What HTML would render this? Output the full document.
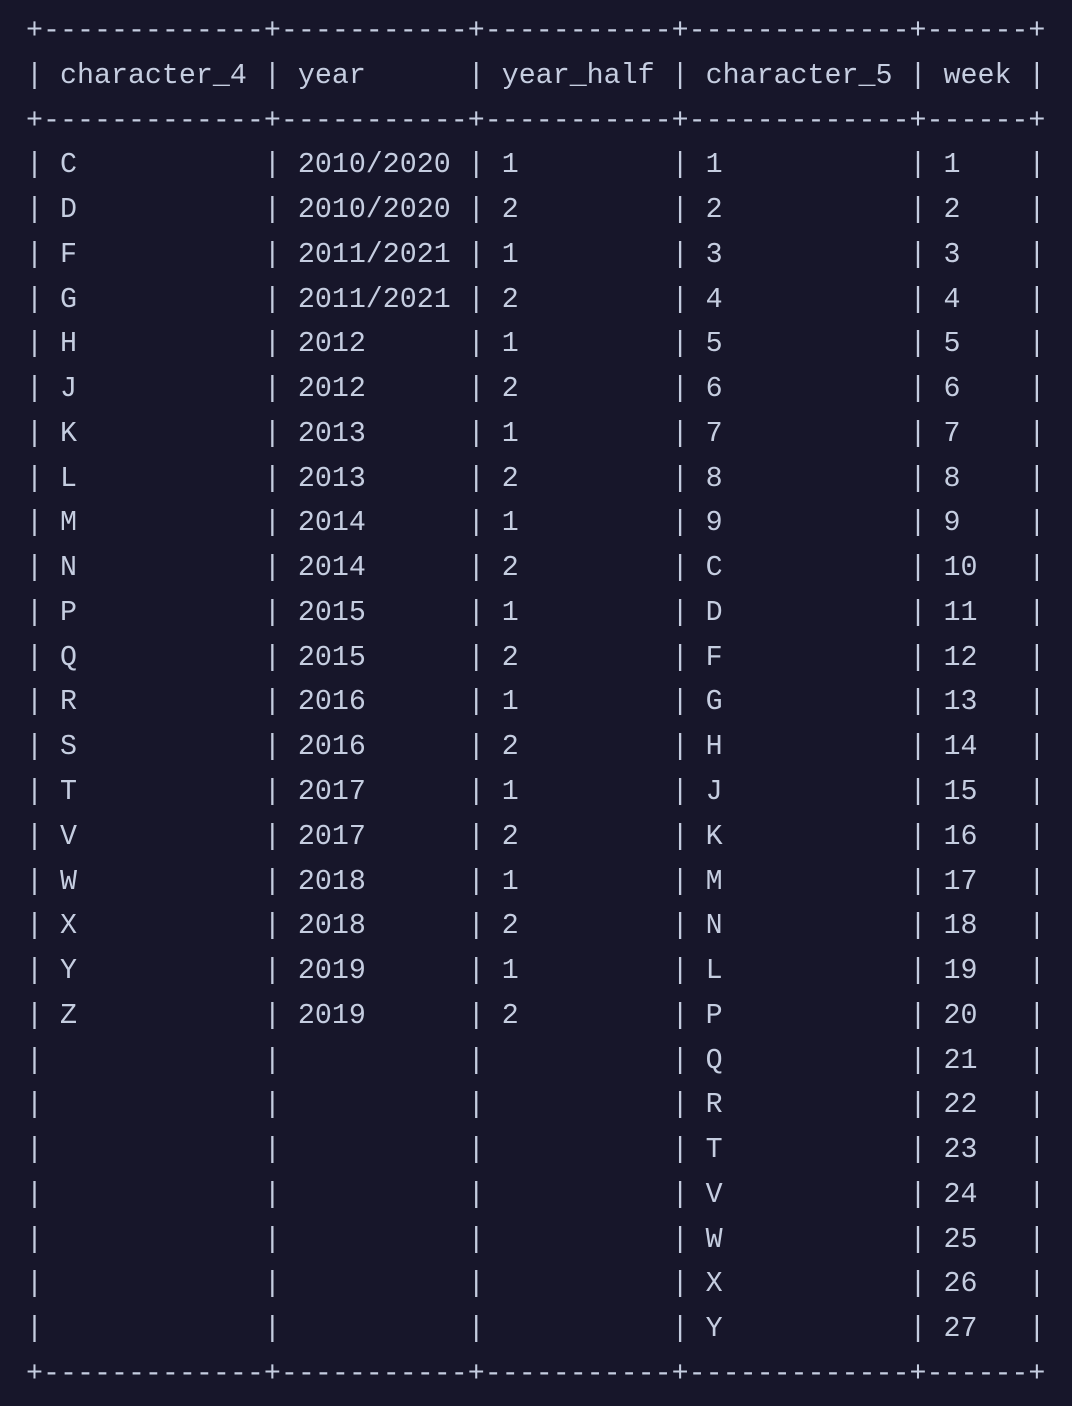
<!DOCTYPE html><html><head><style>
html,body{margin:0;padding:0;background:#17162a;width:1072px;height:1406px;overflow:hidden}
pre{position:absolute;left:26px;top:9px;margin:0;font-family:"Liberation Mono",monospace;font-size:28.32px;line-height:44.77px;color:#c5cde0}
</style></head><body><pre>+-------------+-----------+-----------+-------------+------+
| character_4 | year      | year_half | character_5 | week |
+-------------+-----------+-----------+-------------+------+
| C           | 2010/2020 | 1         | 1           | 1    |
| D           | 2010/2020 | 2         | 2           | 2    |
| F           | 2011/2021 | 1         | 3           | 3    |
| G           | 2011/2021 | 2         | 4           | 4    |
| H           | 2012      | 1         | 5           | 5    |
| J           | 2012      | 2         | 6           | 6    |
| K           | 2013      | 1         | 7           | 7    |
| L           | 2013      | 2         | 8           | 8    |
| M           | 2014      | 1         | 9           | 9    |
| N           | 2014      | 2         | C           | 10   |
| P           | 2015      | 1         | D           | 11   |
| Q           | 2015      | 2         | F           | 12   |
| R           | 2016      | 1         | G           | 13   |
| S           | 2016      | 2         | H           | 14   |
| T           | 2017      | 1         | J           | 15   |
| V           | 2017      | 2         | K           | 16   |
| W           | 2018      | 1         | M           | 17   |
| X           | 2018      | 2         | N           | 18   |
| Y           | 2019      | 1         | L           | 19   |
| Z           | 2019      | 2         | P           | 20   |
|             |           |           | Q           | 21   |
|             |           |           | R           | 22   |
|             |           |           | T           | 23   |
|             |           |           | V           | 24   |
|             |           |           | W           | 25   |
|             |           |           | X           | 26   |
|             |           |           | Y           | 27   |
+-------------+-----------+-----------+-------------+------+</pre></body></html>
